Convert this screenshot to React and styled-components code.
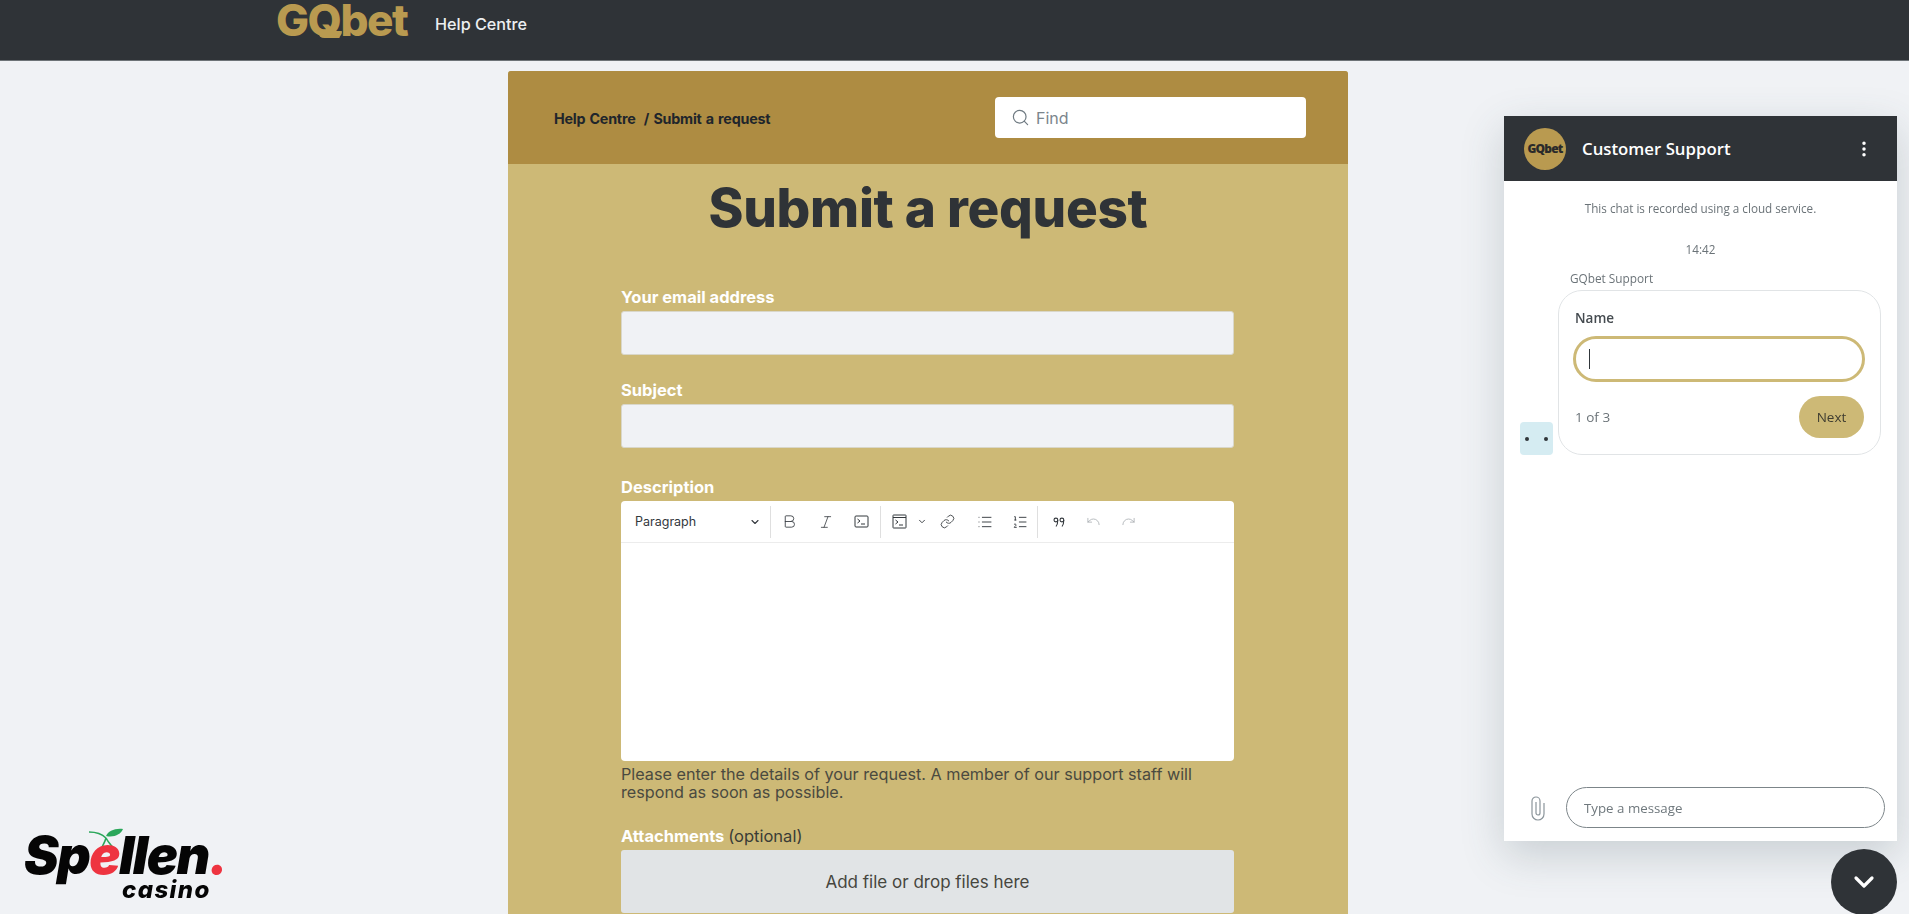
import React from 'react'
import styled, { createGlobalStyle } from 'styled-components'
import { Search, Bold, Italic, Link, List, ListOrdered, Undo, Redo, ChevronDown, MoreVertical } from 'lucide-react'

const sans = '"Inter", "Liberation Sans", sans-serif'
const chatFont = '"Open Sans", "Noto Sans", sans-serif'

const Global = createGlobalStyle`
  html, body {
    margin: 0;
    height: 100%;
    overflow: hidden;
    background: #f0f2f5;
    font-family: ${sans};
  }
  * { box-sizing: border-box; }
`

const TopBar = styled.header`
  height: 61px;
  background: #2f3337;
  border-bottom: 1px solid #6d7377;
  padding-left: 276px;
  display: flex;
  align-items: flex-start;
`

const Logo = styled.div`
  font-family: ${sans};
  font-weight: 800;
  font-size: 44px;
  line-height: 44px;
  letter-spacing: -1.5px;
  color: #b99a50;
  margin-top: -2px;
  width: 159px;
`

const LogoQ = styled.span`
  position: relative;
  &::after {
    content: '';
    position: absolute;
    left: 10px;
    top: 38px;
    width: 24px;
    height: 7px;
    background: #b99a50;
    border-radius: 1px 1px 9px 9px;
  }
`

const TopLink = styled.a`
  color: #eceff1;
  font-size: 16.2px;
  font-weight: 500;
  margin-top: 14px;
`

const Main = styled.main`
  display: flex;
  justify-content: center;
  padding: 10px 561px 0 508px;
`

const Card = styled.section`
  width: 840px;
  background: #cdb976;
  border-radius: 3px 3px 0 0;
`

const CardHead = styled.div`
  height: 93px;
  background: #ae8c42;
  border-radius: 3px 3px 0 0;
  padding: 26px 42px 0 46px;
  display: flex;
  justify-content: space-between;
`

const Crumbs = styled.div`
  font-size: 14.3px;
  font-weight: 700;
  color: #20252b;
  margin-top: 13px;
  letter-spacing: -0.2px;
  word-spacing: 1px;
`

const SearchBox = styled.div`
  width: 311px;
  height: 41px;
  background: #fff;
  border-radius: 4px;
  padding-left: 16px;
  display: flex;
  align-items: center;
  gap: 6px;
  color: #7b858c;
  font-size: 16px;
  svg { color: #6f7a82; }
`

const Title = styled.h1`
  margin: 0;
  padding-top: 15px;
  text-align: center;
  font-size: 53px;
  line-height: 58px;
  font-weight: 800;
  letter-spacing: -0.3px;
  color: #2f3337;
`

const Form = styled.div`
  width: 613px;
  margin: 0 0 0 113px;
  padding-top: 50px;
`

const Field = styled.div`
  margin-bottom: ${p => p.$gap || 25}px;
`

const Label = styled.label`
  display: block;
  font-size: 16.5px;
  line-height: 20px;
  font-weight: 700;
  color: #fff;
  margin-bottom: 4px;
`

const Optional = styled.span`
  font-weight: 400;
  color: #3a3c36;
`

const Input = styled.div`
  height: 44px;
  background: #f0f2f5;
  border: 1px solid #d9d7c9;
  border-radius: 3px;
`

const Toolbar = styled.div`
  height: 42px;
  background: #fff;
  border-radius: 4px 4px 0 0;
  border-bottom: 1px solid #ececec;
  display: flex;
  align-items: center;
  color: #33383d;
`

const Paragraph = styled.div`
  width: 149px;
  padding: 0 9px 0 14px;
  display: flex;
  align-items: center;
  justify-content: space-between;
  font-size: 12.5px;
`

const Sep = styled.span`
  width: 1px;
  height: 32px;
  background: #dfdfdf;
`

const Tool = styled.span`
  width: ${p => p.$w || 35}px;
  display: flex;
  justify-content: center;
  align-items: center;
  color: ${p => (p.$muted ? '#a9aeb2' : 'inherit')};
`

const Editor = styled.div`
  height: 218px;
  background: #fff;
  border-radius: 0 0 4px 4px;
`

const Hint = styled.p`
  margin: 4px 0 0;
  font-size: 16.2px;
  line-height: 18px;
  color: #4a4a40;
`

const Drop = styled.div`
  height: 63px;
  background: #e1e4e6;
  border-radius: 3px;
  display: flex;
  align-items: center;
  justify-content: center;
  font-size: 17px;
  color: #46463e;
`

const Chat = styled.aside`
  position: fixed;
  left: 1504px;
  top: 116px;
  width: 393px;
  height: 725px;
  background: #fff;
  display: flex;
  flex-direction: column;
  font-family: ${chatFont};
  box-shadow: 0 14px 40px rgba(60, 80, 90, 0.22);
`

const ChatHead = styled.div`
  height: 65px;
  background: #2f3337;
  padding: 0 23px 0 20px;
  display: flex;
  align-items: center;
  color: #fff;
  font-size: 16.8px;
  font-weight: 600;
`

const HeadLogo = styled.div`
  width: 42px;
  height: 42px;
  border-radius: 50%;
  background: #b99a50;
  color: #2a2a2a;
  font-size: 12px;
  font-weight: 800;
  letter-spacing: -0.8px;
  display: flex;
  align-items: center;
  justify-content: center;
  margin-right: 16px;
`

const HeadTitle = styled.span`
  flex: 1;
`

const ChatBody = styled.div`
  flex: 1;
  padding-top: 19px;
  display: flex;
  flex-direction: column;
`

const Notice = styled.div`
  text-align: center;
  font-size: 11.7px;
  line-height: 16px;
  color: #6b7378;
`

const Stamp = styled(Notice)`
  margin-top: 25px;
`

const Sender = styled.div`
  margin: 13px 0 0 66px;
  font-size: 11.8px;
  line-height: 16px;
  color: #6b7378;
`

const Row = styled.div`
  margin: 4px 0 0 16px;
  display: flex;
  align-items: flex-end;
  gap: 5px;
`

const Face = styled.div`
  width: 33px;
  height: 33px;
  background: #d5ecf2;
  border-radius: 4px;
  display: flex;
  align-items: center;
  justify-content: space-between;
  padding: 0 5px 0 5px;
  &::before, &::after {
    content: '';
    width: 4px;
    height: 4px;
    border-radius: 50%;
    background: #30363a;
  }
`

const Bubble = styled.div`
  width: 323px;
  height: 165px;
  border: 1px solid #e1e4e6;
  border-radius: 24px;
  padding: 17px 16px 0 16px;
`

const FieldName = styled.div`
  font-size: 13.5px;
  line-height: 20px;
  font-weight: 600;
  color: #454b50;
`

const NameInput = styled.div`
  height: 46px;
  margin: 8px -1px 0 -2px;
  border: 3px solid #cdb976;
  border-radius: 23px;
  padding-left: 13px;
  display: flex;
  align-items: center;
  &::before {
    content: '';
    width: 1px;
    height: 20px;
    background: #30363a;
  }
`

const Steps = styled.div`
  margin-top: 14px;
  display: flex;
  align-items: center;
  justify-content: space-between;
  font-size: 13.5px;
  color: #6b7378;
`

const Next = styled.button`
  width: 65px;
  height: 42px;
  border: 0;
  border-radius: 21px;
  background: #cdb976;
  color: #3f3d30;
  font: 13.5px ${chatFont};
`

const ChatFoot = styled.div`
  height: 54px;
  padding: 0 12px 13px 26px;
  display: flex;
  align-items: flex-start;
  gap: 20px;
  color: #8b959b;
`

const MessageBox = styled.div`
  flex: 1;
  height: 41px;
  border: 1px solid #7c8589;
  border-radius: 21px;
  padding-left: 17px;
  display: flex;
  align-items: center;
  font-size: 13.3px;
  color: #6f787d;
`

const Clip = styled.svg`
  margin-top: 8px;
  flex: none;
`

const Fab = styled.button`
  position: fixed;
  left: 1831px;
  top: 849px;
  width: 66px;
  height: 66px;
  border: 0;
  padding: 0;
  border-radius: 50%;
  background: #2f3337;
  color: #fff;
  display: flex;
  align-items: center;
  justify-content: center;
`

const Badge = styled.div`
  position: fixed;
  left: 24px;
  top: 830px;
  width: 205px;
  height: 72px;
  color: #050505;
`

const BadgeName = styled.div`
  position: absolute;
  left: 0;
  top: 2px;
  font-family: ${sans};
  font-size: 52px;
  line-height: 48px;
  font-weight: 900;
  font-style: italic;
  letter-spacing: -1.5px;
`

const Red = styled.span`
  color: #ee3440;
`

const BadgeSub = styled.div`
  position: absolute;
  left: 98px;
  top: 50px;
  font-family: ${sans};
  font-size: 24px;
  line-height: 20px;
  font-weight: 800;
  font-style: italic;
  letter-spacing: 1.4px;
`

const Stem = styled.svg`
  position: absolute;
  left: 65px;
  top: -2px;
`

const CodeIcon = () => (
  <svg width="15" height="15" viewBox="0 0 15 15" fill="none" stroke="currentColor" strokeWidth="1">
    <rect x="1" y="2" width="13" height="11" rx="1" />
    <path d="M3.500 5l2.500 2-2.500 2M7 10h4" />
  </svg>
)

const CodeBlockIcon = () => (
  <svg width="15" height="15" viewBox="0 0 15 15" fill="none" stroke="currentColor" strokeWidth="1">
    <rect x="1" y="1" width="13" height="13" rx="0.5" />
    <path d="M1 3.500h13M3.500 6l2.500 2-2.500 2M7 11h4" />
  </svg>
)

const QuoteIcon = () => (
  <svg width="12" height="12" viewBox="0 0 12 12" fill="none" stroke="#33383d" strokeWidth="1.1">
    <circle cx="2.900" cy="4" r="1.900" />
    <circle cx="8.900" cy="4" r="1.900" />
    <path d="M4.800 4c0 3-.6 5-1.800 6.500M10.800 4c0 3-.6 5-1.800 6.500" />
  </svg>
)

const ClipIcon = () => (
  <Clip width="16" height="26" viewBox="0 0 16 26" fill="none" stroke="currentColor" strokeWidth="1.200">
    <path d="M14 8v11a6 6 0 0 1-12 0V6a4 4 0 0 1 8 0v12a2 2 0 0 1-4 0V7" />
  </Clip>
)

const Cherry = () => (
  <Stem width="36" height="24" viewBox="0 0 36 24" fill="none">
    <path d="M0 4c7 0 13 2 17 6M17 10c-1 4-3 7-5 11M17 10c2 4 5 7 8 11" stroke="#2aa75a" strokeWidth="1.600" />
    <path d="M17 8c2-5 9-8 17-7-2 5-9 9-17 7z" fill="#2aa75a" />
  </Stem>
)

export default function App() {
  return (
    <>
      <Global />
      <TopBar>
        <Logo>G<LogoQ>Q</LogoQ>bet</Logo>
        <TopLink>Help Centre</TopLink>
      </TopBar>
      <Main>
        <Card>
          <CardHead>
            <Crumbs>Help Centre &nbsp;/ Submit a request</Crumbs>
            <SearchBox>
              <Search size={19} strokeWidth={1.5} />
              Find
            </SearchBox>
          </CardHead>
          <Title>Submit a request</Title>
          <Form>
            <Field>
              <Label>Your email address</Label>
              <Input />
            </Field>
            <Field $gap={29}>
              <Label>Subject</Label>
              <Input />
            </Field>
            <Field>
              <Label>Description</Label>
              <Toolbar>
                <Paragraph>
                  Paragraph
                  <ChevronDown size={12} strokeWidth={2.2} />
                </Paragraph>
                <Sep />
                <Tool $w={37}><Bold size={17} strokeWidth={1.2} /></Tool>
                <Tool><Italic size={16} strokeWidth={1.2} /></Tool>
                <Tool $w={37}><CodeIcon /></Tool>
                <Sep />
                <Tool $w={36}><CodeBlockIcon /></Tool>
                <Tool $w={10}><ChevronDown size={11} strokeWidth={2.2} /></Tool>
                <Tool $w={40}><Link size={15} strokeWidth={1.4} /></Tool>
                <Tool><List size={16} strokeWidth={1.4} /></Tool>
                <Tool><ListOrdered size={16} strokeWidth={1.4} /></Tool>
                <Sep />
                <Tool $w={41}><QuoteIcon /></Tool>
                <Tool $w={29} $muted><Undo size={15} strokeWidth={1.3} /></Tool>
                <Tool $w={40} $muted><Redo size={15} strokeWidth={1.3} /></Tool>
              </Toolbar>
              <Editor />
              <Hint>Please enter the details of your request. A member of our support staff will respond as soon as possible.</Hint>
            </Field>
            <Field>
              <Label>Attachments <Optional>(optional)</Optional></Label>
              <Drop>Add file or drop files here</Drop>
            </Field>
          </Form>
        </Card>
      </Main>
      <Chat>
        <ChatHead>
          <HeadLogo>GQbet</HeadLogo>
          <HeadTitle>Customer Support</HeadTitle>
          <MoreVertical size={20} strokeWidth={2.2} />
        </ChatHead>
        <ChatBody>
          <Notice>This chat is recorded using a cloud service.</Notice>
          <Stamp>14:42</Stamp>
          <Sender>GQbet Support</Sender>
          <Row>
            <Face />
            <Bubble>
              <FieldName>Name</FieldName>
              <NameInput />
              <Steps>
                1 of 3
                <Next>Next</Next>
              </Steps>
            </Bubble>
          </Row>
        </ChatBody>
        <ChatFoot>
          <ClipIcon />
          <MessageBox>Type a message</MessageBox>
        </ChatFoot>
      </Chat>
      <Fab><ChevronDown size={32} strokeWidth={2.4} /></Fab>
      <Badge>
        <Cherry />
        <BadgeName>Sp<Red>e</Red>llen<Red>.</Red></BadgeName>
        <BadgeSub>casino</BadgeSub>
      </Badge>
    </>
  )
}
